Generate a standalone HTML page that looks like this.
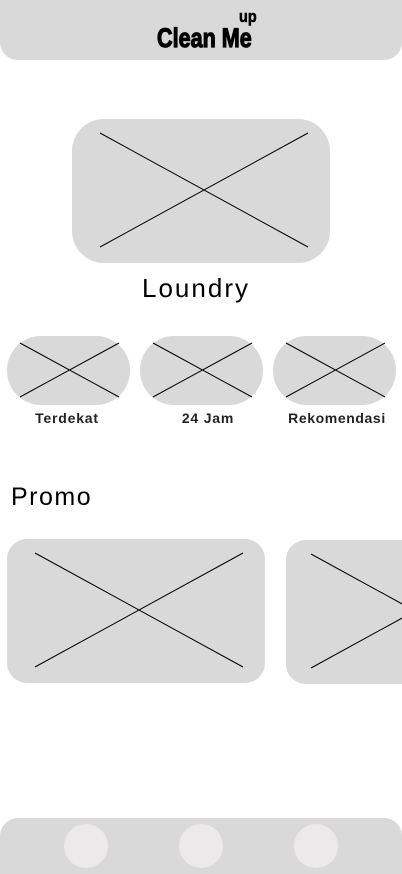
<!DOCTYPE html>
<html><head><meta charset="utf-8"><style>
html,body{margin:0;padding:0;background:#fff;width:402px;height:874px;overflow:hidden;}
svg{display:block}
</style></head><body>
<svg width="402" height="874" viewBox="0 0 402 874" xmlns="http://www.w3.org/2000/svg" font-family="Liberation Sans, sans-serif">
<rect x="0" y="-20" width="402" height="80" rx="18" fill="#d9d9d9"/>
<text x="157" y="47" font-size="27" font-weight="bold" fill="#000" stroke="#000" stroke-width="1.2" transform="translate(157 47) scale(0.8 1) translate(-157 -47)">Clean Me</text>
<text x="239" y="22" font-size="17" font-weight="bold" fill="#000" stroke="#000" stroke-width="0.6" transform="translate(239 22) scale(0.85 1) translate(-239 -22)">up</text>

<rect x="72" y="119" width="258" height="144" rx="32" fill="#d9d9d9"/>
<line x1="100" y1="133" x2="308" y2="247" stroke="#000" stroke-width="1"/>
<line x1="100" y1="247" x2="308" y2="133" stroke="#000" stroke-width="1"/>
<text x="196" y="297" font-size="26" text-anchor="middle" fill="#000" letter-spacing="2">Loundry</text>

<rect x="7" y="336" width="123" height="69" rx="34" fill="#d9d9d9"/>
<line x1="20" y1="343" x2="119" y2="397" stroke="#000"/><line x1="20" y1="397" x2="119" y2="343" stroke="#000"/>
<rect x="140" y="336" width="123" height="69" rx="34" fill="#d9d9d9"/>
<line x1="153" y1="343" x2="252" y2="397" stroke="#000"/><line x1="153" y1="397" x2="252" y2="343" stroke="#000"/>
<rect x="273" y="336" width="123" height="69" rx="34" fill="#d9d9d9"/>
<line x1="286" y1="343" x2="385" y2="397" stroke="#000"/><line x1="286" y1="397" x2="385" y2="343" stroke="#000"/>
<text x="67" y="423" font-size="14" text-anchor="middle" letter-spacing="0.8" font-weight="bold" fill="#222">Terdekat</text>
<text x="208" y="423" font-size="14" text-anchor="middle" letter-spacing="0.8" font-weight="bold" fill="#222">24 Jam</text>
<text x="337" y="423" font-size="14" text-anchor="middle" letter-spacing="0.6" font-weight="bold" fill="#222">Rekomendasi</text>

<text x="11" y="505" font-size="25" letter-spacing="1.5">Promo</text>

<rect x="7" y="539" width="258" height="144" rx="20" fill="#d9d9d9"/>
<line x1="35" y1="553" x2="243" y2="667" stroke="#000"/><line x1="35" y1="667" x2="243" y2="553" stroke="#000"/>
<rect x="286" y="540" width="258" height="144" rx="20" fill="#d9d9d9"/>
<line x1="311" y1="554" x2="519" y2="668" stroke="#000"/><line x1="311" y1="668" x2="519" y2="554" stroke="#000"/>

<rect x="0" y="818" width="402" height="80" rx="18" fill="#d9d9d9"/>
<circle cx="86" cy="846" r="22" fill="#ebe9ea"/>
<circle cx="201" cy="846" r="22" fill="#ebe9ea"/>
<circle cx="316" cy="846" r="22" fill="#ebe9ea"/>
</svg>
</body></html>
